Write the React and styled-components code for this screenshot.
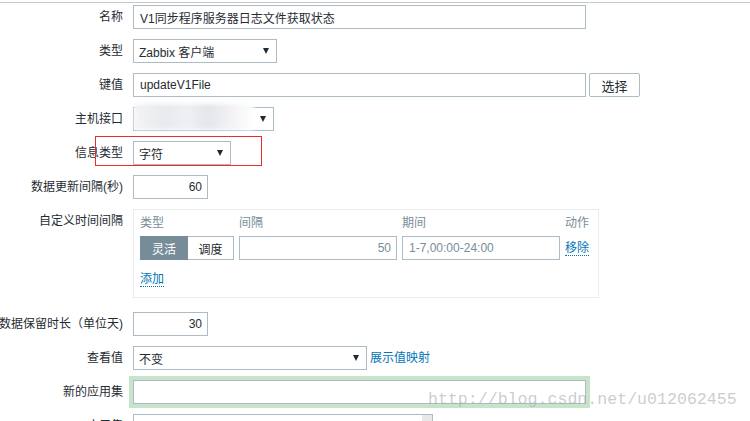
import styled, { createGlobalStyle } from "styled-components";

const GlobalStyle = createGlobalStyle`
  body {
    margin: 0;
    background: #fff;
    font-family: "Liberation Sans", Arial, "Noto Sans CJK SC", sans-serif;
    font-size: 12px;
    color: #1f2c33;
  }
`;

const Page = styled.div`
  position: relative;
  width: 750px;
  height: 421px;
  overflow: hidden;
  background: #fff;
`;

const TopRule = styled.div`
  height: 1px;
  margin-top: 2px;
  background: #c9c9c9;
`;

const Form = styled.div`
  padding-top: 2px;
`;

const Row = styled.div`
  display: grid;
  grid-template-columns: 123px auto;
  column-gap: 10px;
  align-items: center;
  margin-bottom: ${(p) => p.$gap ?? 10}px;
`;

const Label = styled.div`
  display: flex;
  justify-content: flex-end;
  min-width: 0;
  white-space: nowrap;
  line-height: 16px;
  align-self: ${(p) => (p.$top ? "start" : "center")};
  padding-top: ${(p) => (p.$top ? "4px" : "0")};
`;

const Field = styled.div`
  display: flex;
  align-items: center;
  gap: 3px;
`;

const TextInput = styled.input`
  box-sizing: border-box;
  width: ${(p) => p.$w}px;
  height: 24px;
  margin: 0;
  padding: 0 ${(p) => (p.$right ? 5 : 6)}px;
  border: 1px solid #acbbc4;
  border-radius: 0;
  background: #fff;
  font: inherit;
  font-size: 12px;
  color: ${(p) => (p.$muted ? "#768d99" : "#1f2c33")};
  text-align: ${(p) => (p.$right ? "right" : "left")};
  outline: none;
  box-shadow: ${(p) => (p.$focus ? "0 0 0 4px #c6e4c9" : "none")};
`;

const Select = styled.div`
  box-sizing: border-box;
  width: ${(p) => p.$w}px;
  height: 24px;
  display: flex;
  align-items: center;
  justify-content: space-between;
  padding: 0 7px 0 5px;
  border: 1px solid #acbbc4;
  background: #fff;
  white-space: nowrap;
`;

const Arrow = styled.span`
  width: 0;
  height: 0;
  border-left: 3.5px solid transparent;
  border-right: 3.5px solid transparent;
  border-top: 6px solid #1f2c33;
`;

const Blur = styled.span`
  width: 120px;
  height: 26px;
  margin: -5px 0 0 -5px;
  filter: blur(2px);
  background: linear-gradient(
    90deg,
    #f4f4f6 0%,
    #e9eaee 25%,
    #eef0f3 45%,
    #e5e6eb 62%,
    #f2f2f4 80%,
    #ffffff 100%
  );
`;

const Button = styled.button`
  box-sizing: border-box;
  width: 51px;
  height: 24px;
  margin: 0;
  padding: 0;
  border: 1px solid #acbbc4;
  border-radius: 2px;
  background: #fff;
  font: inherit;
  font-size: 13px;
  color: #1f2c33;
`;

const Link = styled.a`
  color: #0275b8;
  text-decoration: none;
  white-space: nowrap;
  line-height: 16px;
  border-bottom: ${(p) => (p.$dotted ? "1px dotted #0275b8" : "none")};
`;

const IntervalBox = styled.div`
  box-sizing: border-box;
  width: 466px;
  height: 89px;
  padding: 5px 10px 0 6px;
  border: 1px solid #ebebeb;
`;

const IntervalGrid = styled.div`
  display: grid;
  grid-template-columns: 94px 158px 158px auto;
  column-gap: 5px;
  row-gap: 5px;
  align-items: center;
`;

const Head = styled.div`
  color: #768d99;
  line-height: 16px;
  text-align: ${(p) => (p.$right ? "right" : "left")};
`;

const Segmented = styled.div`
  display: flex;
  height: 24px;
`;

const Segment = styled.div`
  box-sizing: border-box;
  width: ${(p) => p.$w}px;
  display: flex;
  align-items: center;
  justify-content: center;
  border: 1px solid ${(p) => (p.$active ? "#768d99" : "#acbbc4")};
  border-left-width: ${(p) => (p.$active ? 1 : 0)}px;
  background: ${(p) => (p.$active ? "#768d99" : "#fff")};
  color: ${(p) => (p.$active ? "#fff" : "#1f2c33")};
`;

const ActionCell = styled.div`
  text-align: right;
`;

const AddLine = styled.div`
  margin-top: 11px;
`;

const ListBox = styled.div`
  box-sizing: border-box;
  width: 300px;
  height: 80px;
  display: flex;
  justify-content: flex-end;
  border: 1px solid #acbbc4;
  background: #fff;
`;

const ScrollTrack = styled.div`
  width: 10px;
  background: #e8e8e8;
`;

const Annotation = styled.div`
  position: absolute;
  left: 95px;
  top: 136px;
  width: 167px;
  height: 30px;
  box-sizing: border-box;
  border: 1px solid #ee2b2b;
  pointer-events: none;
`;

const Watermark = styled.div`
  position: absolute;
  left: 428px;
  top: 390px;
  font-family: "Liberation Mono", "Courier New", monospace;
  font-size: 16.6px;
  color: rgba(170, 170, 170, 0.6);
  white-space: nowrap;
  pointer-events: none;
`;

function App() {
  return (
    <Page>
      <GlobalStyle />
      <TopRule />
      <Form>
        <Row>
          <Label>名称</Label>
          <Field>
            <TextInput $w={453} readOnly value="V1同步程序服务器日志文件获取状态" />
          </Field>
        </Row>
        <Row>
          <Label>类型</Label>
          <Field>
            <Select $w={144}>
              Zabbix 客户端
              <Arrow />
            </Select>
          </Field>
        </Row>
        <Row>
          <Label>键值</Label>
          <Field>
            <TextInput $w={453} readOnly value="updateV1File" />
            <Button>选择</Button>
          </Field>
        </Row>
        <Row>
          <Label>主机接口</Label>
          <Field>
            <Select $w={141}>
              <Blur />
              <Arrow />
            </Select>
          </Field>
        </Row>
        <Row>
          <Label>信息类型</Label>
          <Field>
            <Select $w={98}>
              字符
              <Arrow />
            </Select>
          </Field>
        </Row>
        <Row>
          <Label>数据更新间隔(秒)</Label>
          <Field>
            <TextInput $w={75} $right readOnly value="60" />
          </Field>
        </Row>
        <Row $gap={14}>
          <Label $top>自定义时间间隔</Label>
          <Field>
            <IntervalBox>
              <IntervalGrid>
                <Head>类型</Head>
                <Head>间隔</Head>
                <Head>期间</Head>
                <Head $right>动作</Head>
                <Segmented>
                  <Segment $w={48} $active>
                    灵活
                  </Segment>
                  <Segment $w={46}>调度</Segment>
                </Segmented>
                <TextInput $w={158} $right $muted readOnly value="50" />
                <TextInput $w={158} $muted readOnly value="1-7,00:00-24:00" />
                <ActionCell>
                  <Link $dotted>移除</Link>
                </ActionCell>
              </IntervalGrid>
              <AddLine>
                <Link $dotted>添加</Link>
              </AddLine>
            </IntervalBox>
          </Field>
        </Row>
        <Row>
          <Label>数据保留时长（单位天)</Label>
          <Field>
            <TextInput $w={75} $right readOnly value="30" />
          </Field>
        </Row>
        <Row>
          <Label>查看值</Label>
          <Field>
            <Select $w={234}>
              不变
              <Arrow />
            </Select>
            <Link>展示值映射</Link>
          </Field>
        </Row>
        <Row>
          <Label>新的应用集</Label>
          <Field>
            <TextInput $w={453} $focus readOnly value="" />
          </Field>
        </Row>
        <Row>
          <Label $top>应用集</Label>
          <Field>
            <ListBox>
              <ScrollTrack />
            </ListBox>
          </Field>
        </Row>
      </Form>
      <Annotation />
      <Watermark>http://blog.csdn.net/u012062455</Watermark>
    </Page>
  );
}

export default App;
